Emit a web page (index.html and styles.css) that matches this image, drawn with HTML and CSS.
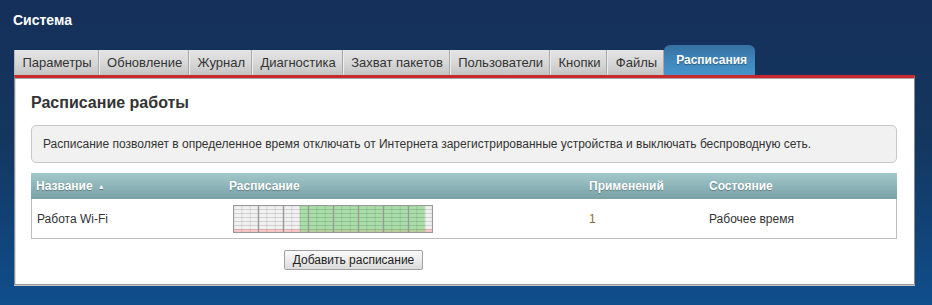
FILE: index.html
```html
<!DOCTYPE html>
<html lang="ru">
<head>
<meta charset="utf-8">
<title>Система</title>
<link rel="stylesheet" href="styles.css">
</head>
<body>
<div class="page">
  <h1 class="title">Система</h1>
  <nav class="tabs">
    <a class="tab">Параметры</a>
    <a class="tab">Обновление</a>
    <a class="tab">Журнал</a>
    <a class="tab">Диагностика</a>
    <a class="tab">Захват пакетов</a>
    <a class="tab">Пользователи</a>
    <a class="tab">Кнопки</a>
    <a class="tab">Файлы</a>
    <a class="tab active">Расписания</a>
  </nav>
  <div class="panel">
    <h2 class="heading">Расписание работы</h2>
    <div class="info">Расписание позволяет в определенное время отключать от Интернета зарегистрированные устройства и выключать беспроводную сеть.</div>
    <div class="table">
      <div class="thead">
        <div class="th">Название <span class="sort">▲</span></div>
        <div class="th">Расписание</div>
        <div class="th">Применений</div>
        <div class="th">Состояние</div>
      </div>
      <div class="row">
        <div class="td">Работа Wi-Fi</div>
        <div class="td">
          <svg class="sched" width="200" height="28" viewBox="0 0 200 28">
            <rect x="0" y="0" width="200" height="24" fill="#f1f1f1"/>
            <rect x="66.67" y="0" width="125" height="24" fill="#a9dea9"/>
            <rect x="0" y="24" width="200" height="4" fill="#fcc8c8"/>
            <rect x="66.67" y="24" width="125" height="4" fill="#b6d39e"/>
            <path d="M0 4.5H200M0 8.5H200M0 12.5H200M0 16.5H200M0 20.5H200M0 24.5H200" stroke="#000" stroke-opacity="0.13" stroke-width="1"/>
            <path d="M8.83 0V28M17.17 0V28M33.83 0V28M42.17 0V28M58.83 0V28M67.17 0V28M83.83 0V28M92.17 0V28M108.83 0V28M117.17 0V28M133.83 0V28M142.17 0V28M158.83 0V28M167.17 0V28M183.83 0V28M192.17 0V28" stroke="#000" stroke-opacity="0.1" stroke-width="1"/>
            <path d="M25.5 0V28M50.5 0V28M75.5 0V28M100.5 0V28M125.5 0V28M150.5 0V28M175.5 0V28" stroke="#999" stroke-width="1.4"/>
            <rect x="0.5" y="0.5" width="199" height="27" fill="none" stroke="#999" stroke-width="1.2"/>
          </svg>
        </div>
        <div class="td count">1</div>
        <div class="td">Рабочее время</div>
      </div>
    </div>
    <div class="actions">
      <button class="btn" type="button">Добавить расписание</button>
    </div>
  </div>
</div>
</body>
</html>
```

FILE: styles.css
```css
* { box-sizing: border-box; }
html, body { margin: 0; height: 100%; }
body {
  background: linear-gradient(180deg, #15305a 0%, #13365f 45%, #0f4e8c 100%);
  font-family: Arial, "Liberation Sans", sans-serif;
  color: #333;
  overflow: hidden;
}
.page {
  padding: 12px 17px 0 14px;
}
.title {
  margin: 0 0 0 -1px;
  font-size: 14px;
  line-height: 16px;
  font-weight: bold;
  color: #fff;
}
.tabs {
  display: flex;
  align-items: flex-end;
  height: 30px;
  margin-top: 17px;
}
.tab {
  display: flex;
  align-items: center;
  height: 25px;
  padding: 0 6px 0 7.4px;
  font-size: 13px;
  color: #333;
  background: linear-gradient(180deg, #e4e4e4 0%, #d6d6d6 55%, #c4c4c4 100%);
  border-right: 1px solid #a8a8a8;
  border-left: 1px solid #ececec;
  white-space: nowrap;
}
.tab:first-child { border-left: 1px solid #b8b8b8; }
.tab.active {
  height: 30px;
  padding: 0 8px 0 12px;
  margin-left: 0;
  font-size: 12px;
  font-weight: bold;
  color: #fff;
  text-shadow: 0 1px 1px rgba(0,0,0,0.35);
  background: linear-gradient(180deg, #3670a2 0%, #3f86ba 50%, #4794cb 100%);
  border: none;
  border-radius: 6px 6px 0 0;
}
.panel {
  background: #fff;
  border-top: 3px solid #c9282d;
  border-left: 1px solid #8a8a8a;
  border-right: 1px solid #8a8a8a;
  border-bottom: 1px solid #9a9a9a;
  box-shadow: inset 0 1px 0 #a8a8a8, inset 1px 0 0 #dedede, 0 1px 0 #c8c8c8;
  padding: 15px 17px 15px 16px;
  height: 210px;
}
.heading {
  margin: 0;
  font-size: 16px;
  line-height: 19px;
  font-weight: bold;
  color: #333;
}
.info {
  margin-top: 13px;
  height: 38px;
  display: flex;
  align-items: center;
  padding: 0 11px;
  font-size: 12px;
  color: #333;
  background: #f1f1f1;
  border: 1px solid #c8c8c8;
  border-radius: 5px;
}
.table {
  margin-top: 10px;
  border: 1px solid #bdbdbd;
  border-top: none;
}
.thead, .row {
  display: grid;
  grid-template-columns: 192px 360px 120px 1fr;
}
.thead {
  height: 26px;
  margin: 0 -1px;
  background: linear-gradient(180deg, #a2c8cb 0%, #8db5b9 50%, #7aa2a6 100%);
}
.th {
  display: flex;
  align-items: center;
  padding-left: 6px;
  font-size: 12px;
  font-weight: bold;
  color: #fff;
  text-shadow: 0 1px 1px rgba(0,0,0,0.3);
}
.thead .th:first-child { padding-left: 5px; }
.sort { font-size: 7px; margin-left: 5px; }
.row { height: 39px; }
.td {
  display: flex;
  align-items: center;
  padding-left: 5px;
  font-size: 12px;
  color: #333;
}
.sched { margin-left: 4px; display: block; }
.count { color: #8d6d2b; }
.actions {
  display: flex;
  padding-left: 253px;
  margin-top: 11px;
}
.btn {
  width: 139px;
  height: 20px;
  padding: 0;
  font-family: Arial, "Liberation Sans", sans-serif;
  font-size: 12px;
  color: #222;
  background: linear-gradient(180deg, #fafafa 0%, #ececec 50%, #dadada 100%);
  border: 1px solid #a0a0a0;
  border-radius: 2px;
}
```
